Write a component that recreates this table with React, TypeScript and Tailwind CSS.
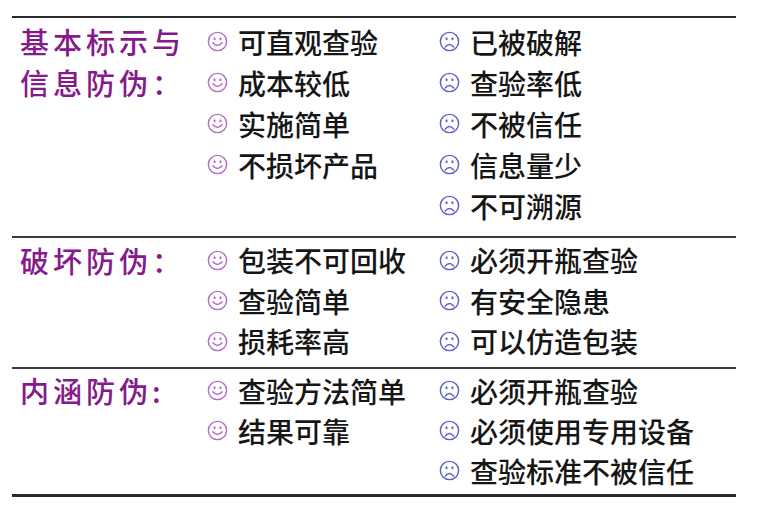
import React from "react";

type Section = {
  label: string[];
  pros: string[];
  cons: string[];
  pt: string;
  pb: string;
  rowH: string;
};

const sections: Section[] = [
  {
    label: ["基本标示与", "信息防伪："],
    pros: ["可直观查验", "成本较低", "实施简单", "不损坏产品"],
    cons: ["已被破解", "查验率低", "不被信任", "信息量少", "不可溯源"],
    pt: "pt-[3px]",
    pb: "pb-[10px]",
    rowH: "h-[41px]",
  },
  {
    label: ["破坏防伪："],
    pros: ["包装不可回收", "查验简单", "损耗率高"],
    cons: ["必须开瓶查验", "有安全隐患", "可以仿造包装"],
    pt: "pt-[2px]",
    pb: "pb-[5px]",
    rowH: "h-[40.5px]",
  },
  {
    label: ["内涵防伪:"],
    pros: ["查验方法简单", "结果可靠"],
    cons: ["必须开瓶查验", "必须使用专用设备", "查验标准不被信任"],
    pt: "pt-[2px]",
    pb: "pb-[3px]",
    rowH: "h-[40px]",
  },
];

function Face({ happy }: { happy: boolean }) {
  const color = happy ? "#b46fc8" : "#5f62c6";
  return (
    <svg width="21" height="21" viewBox="0 0 20 20" className="shrink-0">
      <circle cx="10" cy="10" r="8.7" fill="none" stroke={color} strokeWidth="1.4" />
      <ellipse cx="7.2" cy="7.4" rx="1" ry="1.5" fill={color} />
      <ellipse cx="12.8" cy="7.4" rx="1" ry="1.5" fill={color} />
      {happy ? (
        <path d="M5.6 11.2 Q10 16.4 14.4 11.2" fill="none" stroke={color} strokeWidth="1.4" strokeLinecap="round" />
      ) : (
        <path d="M6 15.2 Q10 10.4 14 15.2" fill="none" stroke={color} strokeWidth="1.4" strokeLinecap="round" />
      )}
    </svg>
  );
}

function Item({ text, happy, rowH }: { text: string; happy: boolean; rowH: string }) {
  return (
    <div className={`flex items-center gap-[10px] ${rowH}`}>
      <Face happy={happy} />
      <span className="text-[28px] leading-none font-medium text-[#161616] whitespace-nowrap">{text}</span>
    </div>
  );
}

export default function App() {
  return (
    <div
      className="w-[759px] h-[509px] bg-white pt-[16px] pl-[12px]"
      style={{ fontFamily: '"Noto Sans CJK SC", "Noto Sans", sans-serif' }}
    >
      <div className="w-[724px] border-t-[2.5px] border-b-[3px] border-[#2a2a2a]">
        {sections.map((s, i) => (
          <div
            key={i}
            className={`grid grid-cols-[195px_232px_1fr] ${s.pt} ${s.pb} ${
              i > 0 ? "border-t-[2px] border-[#3a3a3a]" : ""
            }`}
          >
            <div className="pl-[8px] flex flex-col">
              {s.label.map((l) => (
                <div
                  key={l}
                  className={`flex items-center ${s.rowH} text-[29px] leading-none font-medium tracking-[4px] text-[#861a8c] whitespace-nowrap`}
                >
                  {l}
                </div>
              ))}
            </div>
            <div className="flex flex-col">
              {s.pros.map((p) => (
                <Item key={p} text={p} happy rowH={s.rowH} />
              ))}
            </div>
            <div className="flex flex-col">
              {s.cons.map((c) => (
                <Item key={c} text={c} happy={false} rowH={s.rowH} />
              ))}
            </div>
          </div>
        ))}
      </div>
    </div>
  );
}
